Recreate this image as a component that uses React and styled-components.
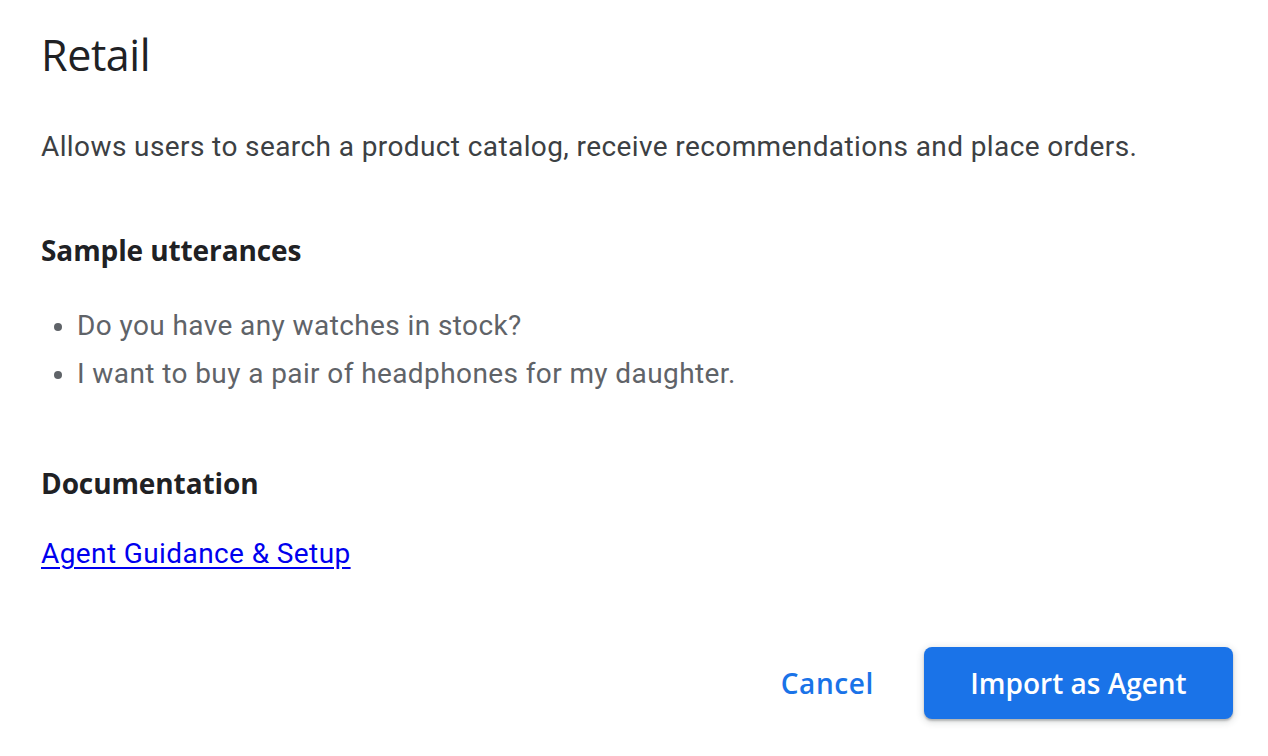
import React from "react";
import styled, { createGlobalStyle } from "styled-components";

const GlobalStyle = createGlobalStyle`
  html, body {
    margin: 0;
    padding: 0;
    background: #ffffff;
  }
  body {
    font-family: Roboto, "Liberation Sans", Arial, sans-serif;
  }
`;

const Dialog = styled.div`
  width: 1268px;
  height: 756px;
  box-sizing: border-box;
  padding: 27px 35px 0 41px;
  display: flex;
  flex-direction: column;
  background: #ffffff;
`;

const Title = styled.h1`
  margin: 0;
  font-family: "Open Sans", Roboto, sans-serif;
  font-weight: 400;
  font-size: 43px;
  line-height: 56px;
  color: #202124;
  letter-spacing: -0.4px;
`;

const Description = styled.p`
  margin: 44px 0 0;
  font-size: 28px;
  line-height: 40px;
  color: #3c4043;
  letter-spacing: 0.4px;
`;

const SectionTitle = styled.h2`
  margin: ${(p) => p.$gap}px 0 0;
  font-family: "Open Sans", Roboto, sans-serif;
  font-weight: 700;
  font-size: 28px;
  line-height: 40px;
  color: #202124;
  letter-spacing: -0.1px;
`;

const Utterances = styled.ul`
  margin: 32px 0 0;
  padding-left: 36px;
  list-style: disc;
`;

const Utterance = styled.li`
  font-size: 28px;
  line-height: 48px;
  color: #5f6368;
  letter-spacing: 0.4px;
  &::marker {
    color: #5f6368;
    font-size: 26px;
  }
`;

const DocLink = styled.a`
  margin-top: 31px;
  align-self: flex-start;
  font-size: 28px;
  line-height: 40px;
  color: #0000ee;
  text-decoration: underline;
  text-underline-offset: 4px;
  letter-spacing: 0.4px;
`;

const Actions = styled.div`
  margin-top: 73px;
  display: flex;
  justify-content: flex-end;
  align-items: center;
  gap: 50px;
`;

const Button = styled.button`
  height: 72px;
  border: none;
  border-radius: 8px;
  font-family: "Open Sans", Roboto, sans-serif;
  font-weight: 600;
  font-size: 28px;
  letter-spacing: ${(p) => (p.$primary ? "0" : "0.6px")};
  cursor: pointer;
  color: ${(p) => (p.$primary ? "#ffffff" : "#1a73e8")};
  background: ${(p) => (p.$primary ? "#1a73e8" : "transparent")};
  padding: 0;
  width: ${(p) => (p.$primary ? "309px" : "auto")};
  box-shadow: ${(p) =>
    p.$primary
      ? "0 2px 2px rgba(60,64,67,0.3), 0 2px 6px 2px rgba(60,64,67,0.15)"
      : "none"};
`;

const utterances = [
  "Do you have any watches in stock?",
  "I want to buy a pair of headphones for my daughter.",
];

export default function App() {
  return (
    <>
      <GlobalStyle />
      <Dialog>
        <Title>Retail</Title>
        <Description>
          Allows users to search a product catalog, receive recommendations and
          place orders.
        </Description>
        <SectionTitle $gap={63}>Sample utterances</SectionTitle>
        <Utterances>
          {utterances.map((u) => (
            <Utterance key={u}>{u}</Utterance>
          ))}
        </Utterances>
        <SectionTitle $gap={65}>Documentation</SectionTitle>
        <DocLink href="#">Agent Guidance &amp; Setup</DocLink>
        <Actions>
          <Button>Cancel</Button>
          <Button $primary>Import as Agent</Button>
        </Actions>
      </Dialog>
    </>
  );
}
